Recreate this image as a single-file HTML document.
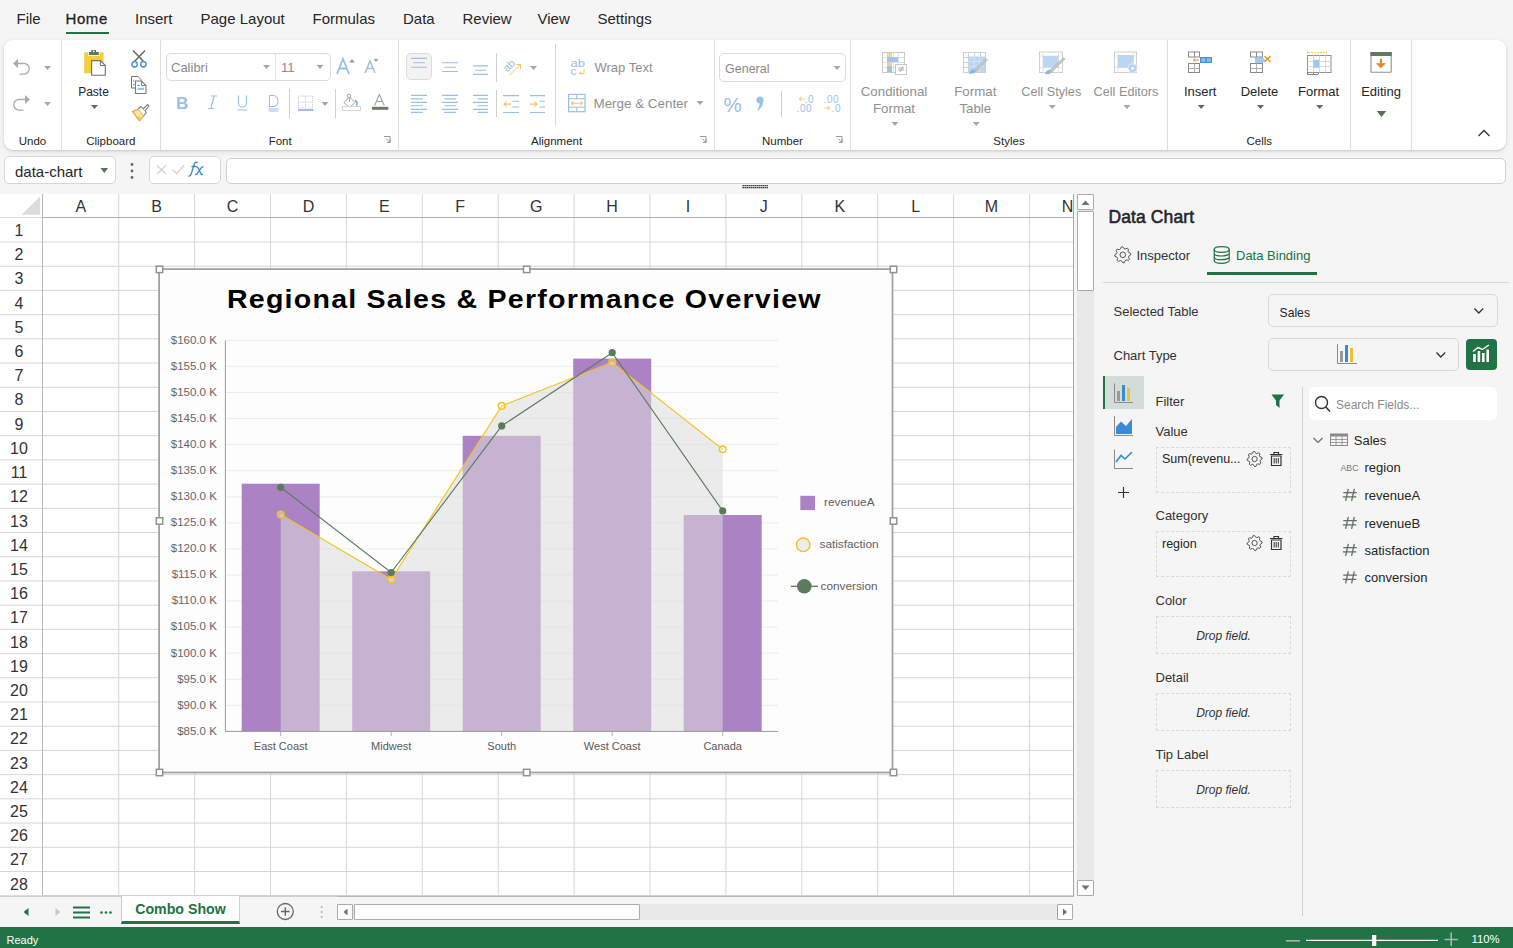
<!DOCTYPE html><html><head><meta charset="utf-8"><style>
html,body{margin:0;padding:0;}
body{width:1513px;height:948px;position:relative;overflow:hidden;background:#f5f5f5;font-family:"Liberation Sans", sans-serif;}
.t{position:absolute;line-height:1;white-space:nowrap;}
svg{overflow:visible}
</style></head><body>
<div class="t" style="left:16.5px;top:11.0px;font-size:15px;color:#262626;">File</div>
<div class="t" style="left:65.5px;top:11.2px;font-size:15px;color:#1f1f1f;letter-spacing:0.6px;-webkit-text-stroke:0.3px #1f1f1f;">Home</div>
<div class="t" style="left:135.0px;top:11.0px;font-size:15px;color:#262626;">Insert</div>
<div class="t" style="left:200.5px;top:11.0px;font-size:15px;color:#262626;">Page Layout</div>
<div class="t" style="left:312.5px;top:11.0px;font-size:15px;color:#262626;">Formulas</div>
<div class="t" style="left:403.0px;top:11.0px;font-size:15px;color:#262626;">Data</div>
<div class="t" style="left:462.5px;top:11.0px;font-size:15px;color:#262626;">Review</div>
<div class="t" style="left:537.5px;top:11.0px;font-size:15px;color:#262626;">View</div>
<div class="t" style="left:597.5px;top:11.0px;font-size:15px;color:#262626;">Settings</div>
<div style="position:absolute;left:66px;top:32px;width:43px;height:2px;background:#217346;"></div>
<div style="position:absolute;left:4px;top:40px;width:1502px;height:110px;background:#fff;border-radius:9px;box-shadow:0 1px 2px rgba(0,0,0,0.12),0 2px 6px rgba(0,0,0,0.08);"></div>
<div style="position:absolute;left:61px;top:40px;width:1px;height:110px;background:#dedede;"></div>
<div style="position:absolute;left:160px;top:40px;width:1px;height:110px;background:#dedede;"></div>
<div style="position:absolute;left:398px;top:40px;width:1px;height:110px;background:#dedede;"></div>
<div style="position:absolute;left:714px;top:40px;width:1px;height:110px;background:#dedede;"></div>
<div style="position:absolute;left:850px;top:40px;width:1px;height:110px;background:#dedede;"></div>
<div style="position:absolute;left:1167px;top:40px;width:1px;height:110px;background:#dedede;"></div>
<div style="position:absolute;left:1350px;top:40px;width:1px;height:110px;background:#dedede;"></div>
<div style="position:absolute;left:1411px;top:40px;width:1px;height:110px;background:#dedede;"></div>
<div class="t" style="left:-467.5px;width:1000px;text-align:center;top:135.9px;font-size:11.5px;color:#262626;">Undo</div>
<div class="t" style="left:-389.2px;width:1000px;text-align:center;top:135.9px;font-size:11.5px;color:#262626;">Clipboard</div>
<div class="t" style="left:-219.8px;width:1000px;text-align:center;top:135.9px;font-size:11.5px;color:#262626;">Font</div>
<div class="t" style="left:56.6px;width:1000px;text-align:center;top:135.9px;font-size:11.5px;color:#262626;">Alignment</div>
<div class="t" style="left:282.5px;width:1000px;text-align:center;top:135.9px;font-size:11.5px;color:#262626;">Number</div>
<div class="t" style="left:509.0px;width:1000px;text-align:center;top:135.9px;font-size:11.5px;color:#262626;">Styles</div>
<div class="t" style="left:759.3px;width:1000px;text-align:center;top:135.9px;font-size:11.5px;color:#262626;">Cells</div>
<div style="position:absolute;left:166px;top:53px;width:165px;height:28px;border:1px solid #dcdcdc;border-radius:5px;box-sizing:border-box;"></div>
<div style="position:absolute;left:275px;top:54px;width:1px;height:26px;background:#e2e2e2;"></div>
<div style="position:absolute;left:289px;top:89px;width:1px;height:29px;background:#d0d0d0;"></div>
<div style="position:absolute;left:335px;top:89px;width:1px;height:29px;background:#d0d0d0;"></div>
<div style="position:absolute;left:406px;top:53px;width:26px;height:27px;background:#f3f3f3;border:1px solid #dcdcdc;border-radius:5px;box-sizing:border-box;"></div>
<div style="position:absolute;left:496px;top:53px;width:1px;height:29px;background:#d0d0d0;"></div>
<div style="position:absolute;left:555px;top:44px;width:1px;height:82px;background:#d8d8d8;"></div>
<div style="position:absolute;left:496px;top:90px;width:1px;height:27px;background:#d0d0d0;"></div>
<div style="position:absolute;left:719px;top:53px;width:127px;height:29px;border:1px solid #dcdcdc;border-radius:5px;box-sizing:border-box;"></div>
<div style="position:absolute;left:781px;top:91px;width:1px;height:26px;background:#d0d0d0;"></div>
<div class="t" style="left:394.0px;width:1000px;text-align:center;top:84.7px;font-size:13.3px;color:#8f8f8f;">Conditional</div>
<div class="t" style="left:394.0px;width:1000px;text-align:center;top:101.7px;font-size:13.3px;color:#8f8f8f;">Format</div>
<div class="t" style="left:475.3px;width:1000px;text-align:center;top:84.7px;font-size:13.3px;color:#8f8f8f;">Format</div>
<div class="t" style="left:475.3px;width:1000px;text-align:center;top:101.7px;font-size:13.3px;color:#8f8f8f;">Table</div>
<div class="t" style="left:551.3px;width:1000px;text-align:center;top:85.8px;font-size:12.7px;color:#8f8f8f;">Cell Styles</div>
<div class="t" style="left:626.0px;width:1000px;text-align:center;top:85.8px;font-size:12.7px;color:#8f8f8f;">Cell Editors</div>
<div class="t" style="left:700.2px;width:1000px;text-align:center;top:85.0px;font-size:13px;color:#262626;">Insert</div>
<div class="t" style="left:759.5px;width:1000px;text-align:center;top:85.0px;font-size:13px;color:#262626;">Delete</div>
<div class="t" style="left:818.6px;width:1000px;text-align:center;top:85.0px;font-size:13px;color:#262626;">Format</div>
<div class="t" style="left:881.0px;width:1000px;text-align:center;top:84.7px;font-size:13px;color:#262626;">Editing</div>
<div class="t" style="left:171.0px;top:60.8px;font-size:13px;color:#8a8a8a;">Calibri</div>
<div class="t" style="left:281.0px;top:60.8px;font-size:13px;color:#8a8a8a;">11</div>
<div class="t" style="left:594.5px;top:61.4px;font-size:13px;color:#8f8f8f;">Wrap Text</div>
<div class="t" style="left:593.5px;top:96.5px;font-size:13.4px;color:#8f8f8f;">Merge &amp; Center</div>
<div class="t" style="left:725.0px;top:62.7px;font-size:12.5px;color:#8a8a8a;">General</div>
<div class="t" style="left:-406.5px;width:1000px;text-align:center;top:85.6px;font-size:12px;color:#262626;">Paste</div>
<svg style="position:absolute;left:0px;top:40px;" width="1513" height="110" viewBox="0 40 1513 110"><path d="M384 136.5 h6 v6 M386 138.5 l4 4 M390 139.5 v3 h-3" stroke="#9a9a9a" stroke-width="1" fill="none"/><path d="M700 136.5 h6 v6 M702 138.5 l4 4 M706 139.5 v3 h-3" stroke="#9a9a9a" stroke-width="1" fill="none"/><path d="M836 136.5 h6 v6 M838 138.5 l4 4 M842 139.5 v3 h-3" stroke="#9a9a9a" stroke-width="1" fill="none"/><path d="M16 63.5 h8 a5.3 5.3 0 0 1 0 10.6 h-4.5" stroke="#ababab" stroke-width="1.3" fill="none"/><path d="M13 63.5 l5 -4.5 v9 z" fill="#ababab"/><path d="M27 99.5 h-8 a5.3 5.3 0 0 0 0 10.6 h4.5" stroke="#ababab" stroke-width="1.3" fill="none"/><path d="M30 99.5 l-5 -4.5 v9 z" fill="#ababab"/><path d="M44.0 66.0 L51.0 66.0 L47.5 70.0 Z" fill="#a6a6a6"/><path d="M44.0 102.0 L51.0 102.0 L47.5 106.0 Z" fill="#a6a6a6"/><path d="M84.2 52.2 H88 V55.8 H99.6 V52.2 H103.6 V73.3 H84.2 Z" fill="#f2d03b"/><path d="M91.3 50 H96.1 V52 H98.8 V55 H88.9 V52 H91.3 Z" fill="#5f7a5f"/><circle cx="93.7" cy="51.4" r="0.8" fill="#fff"/><path d="M91.6 60.6 H100.4 L105.3 65.5 V75.3 H91.6 Z" fill="#fff" stroke="#6f6f6f" stroke-width="1.1"/><path d="M100.4 60.6 V65.5 H105.3" fill="none" stroke="#6f6f6f" stroke-width="1"/><path d="M91.0 105.0 L98.0 105.0 L94.5 109.0 Z" fill="#5b6e5b"/><path d="M133 50.5 L144.5 62.5 M145 50.5 L133.5 62.5" stroke="#5b6e5b" stroke-width="1.5"/><circle cx="134.6" cy="64.3" r="2.7" fill="#fff" stroke="#3b8ad6" stroke-width="1.3"/><circle cx="143.4" cy="64.3" r="2.7" fill="#fff" stroke="#3b8ad6" stroke-width="1.3"/><path d="M131.5 76.5 h6.5 l3 3 v8.5 h-9.5 z" fill="#fff" stroke="#6b7b6b" stroke-width="1"/><path d="M135.5 81 h6 l4.5 4.5 v8 h-10.5 z" fill="#fff" stroke="#7d7d7d" stroke-width="1.1"/><path d="M141.5 81 v4.5 h4.5" fill="none" stroke="#7d7d7d" stroke-width="1"/><path d="M133 81 h1.5 M133 84.5 h1.5 M137.5 85.5 h2 M137.5 89 h6.5" stroke="#3b8ad6" stroke-width="1"/><path d="M132.5 111.5 L138.5 109 L144 115.5 L139.5 121 Z" fill="#fbe3a0" stroke="#e8962a" stroke-width="1.1" stroke-linejoin="round"/><path d="M134.5 115 L141.5 118.5 L139.5 121 Z" fill="#f5c342"/><path d="M138.5 109 L141 106.5 L146.5 112.5 L144 115.5" fill="#fff" stroke="#7d7d7d" stroke-width="1.1" stroke-linejoin="round"/><path d="M143 109 L147.5 104.5 L149 106 L144.8 110.8" fill="#fff" stroke="#7d7d7d" stroke-width="1.1"/><path d="M263.0 65.0 L270.0 65.0 L266.5 69.0 Z" fill="#a6a6a6"/><path d="M316.5 65.0 L323.5 65.0 L320 69.0 Z" fill="#a6a6a6"/><path d="M337 74 L343 59 L349 74 M339.3 68.5 h7.4" stroke="#9ac0e6" stroke-width="1.8" fill="none"/><path d="M349 62.5 l3 -3.5 l3 3.5 z" fill="#a0a0a0"/><path d="M365 73 L370 61 L375 73 M366.8 68.5 h6.4" stroke="#9ac0e6" stroke-width="1.5" fill="none"/><path d="M373.5 59 h5 l-2.5 3 z" fill="#a0a0a0"/><text x="176" y="108.5" font-family="Liberation Sans" font-weight="700" font-size="17" fill="#9ac0e6">B</text><path d="M211 96 h6 M208 108.5 h6 M214 96.5 L211 108" stroke="#9ac0e6" stroke-width="1.2" fill="none"/><path d="M238.5 95.5 v7.5 a4 4 0 0 0 8 0 v-7.5 M237.5 110 h10" stroke="#9ac0e6" stroke-width="1.2" fill="none"/><path d="M269.5 95.5 h4 a4.5 5.5 0 0 1 0 11 h-4 z M268.5 109 h10 M268.5 111 h10" stroke="#9ac0e6" stroke-width="1.1" fill="none"/><path d="M298.5 96 h14 v12 h-14 z M305.5 96 v12 M298.5 102 h14" stroke="#c8c8c8" stroke-width="1" stroke-dasharray="1 1" fill="none"/><path d="M298 110 h15.5" stroke="#6fa8dc" stroke-width="1.4"/><path d="M321.5 102.0 L328.5 102.0 L325 106.0 Z" fill="#a6a6a6"/><path d="M343.8 102.5 L349.5 97 L355 102.5 L349.5 107.5 Z" fill="none" stroke="#a6a6a6" stroke-width="1"/><circle cx="349" cy="96" r="1.8" fill="none" stroke="#a6a6a6" stroke-width="1"/><path d="M349.5 98 V102" stroke="#a6a6a6" stroke-width="1"/><path d="M355 100.5 q3 0.5 1.5 5" stroke="#6fa8dc" stroke-width="1.6" fill="none"/><rect x="342.5" y="106.5" width="18" height="4" fill="#fff" stroke="#d8d8d8" stroke-width="1"/><path d="M374.6 105.5 L379.4 94.5 L384.3 105.5 M376.4 101.5 h6" stroke="#a0a0a0" stroke-width="1.1" fill="none"/><rect x="372" y="106.8" width="16.3" height="3" fill="#6b7b6b"/><path d="M411 58.4 H427 M413.3 62.8 H425 M411 67.3 H427" stroke="#9ac0e6" stroke-width="1.1"/><path d="M442 62.8 H458 M444.3 67.3 H456 M442 71.5 H458" stroke="#9ac0e6" stroke-width="1.1"/><path d="M473 65.9 H488 M475.1 70.2 H485.9 M473 74.4 H488" stroke="#9ac0e6" stroke-width="1.1"/><text x="502" y="68" font-family="Liberation Sans" font-size="11" fill="#9ac0e6" transform="rotate(-45 510 64)">ab</text><path d="M509.5 75 L520.5 64.5 M516 64.5 h4.5 v4.5" stroke="#f3c46a" stroke-width="1" fill="none"/><path d="M530.0 66.0 L537.0 66.0 L533.5 70.0 Z" fill="#a6a6a6"/><text x="570.6" y="66.5" font-family="Liberation Sans" font-size="11.5" fill="#9ac0e6" textLength="14.5" lengthAdjust="spacingAndGlyphs">ab</text><text x="570.6" y="75.3" font-family="Liberation Sans" font-size="11.5" fill="#9ac0e6">c</text><path d="M584 69 v4.3 h-4.5 M581.3 71.5 l-1.8 1.8 l1.8 1.8" stroke="#f3c46a" stroke-width="1" fill="none"/><path d="M411 95.4 H427 M411 98.9 H422.8 M411 102.4 H427 M411 105.8 H422.8 M411 109.4 H427 M411 112.4 H422.8" stroke="#9ac0e6" stroke-width="1.1"/><path d="M442 95.4 H458 M444.3 98.9 H456 M442 102.4 H458 M444.3 105.8 H456 M442 109.4 H458 M444.3 112.4 H456" stroke="#9ac0e6" stroke-width="1.1"/><path d="M473 95.4 H488 M477.6 98.9 H488 M473 102.4 H488 M477.6 105.8 H488 M473 109.4 H488 M477.6 112.4 H488" stroke="#9ac0e6" stroke-width="1.1"/><path d="M503 95.6 H519 M512.3 101.3 H519 M512.3 107 H519 M503 112.5 H519" stroke="#9ac0e6" stroke-width="1.1"/><path d="M511 104.2 H504 M506.5 101.7 L504 104.2 L506.5 106.7" stroke="#f3c46a" stroke-width="1.2" fill="none"/><path d="M530 95.6 H545 M539.5 101.3 H545 M539.5 107 H545 M530 112.5 H545" stroke="#9ac0e6" stroke-width="1.1"/><path d="M530 104.2 H537 M534.5 101.7 L537 104.2 L534.5 106.7" stroke="#f3c46a" stroke-width="1.2" fill="none"/><rect x="568.6" y="94.4" width="16.4" height="17.3" fill="none" stroke="#9ac0e6" stroke-width="1.2"/><path d="M568.6 98.8 H585 M568.6 107.3 H585 M576.8 94.4 V98.8 M576.8 107.3 V111.7" stroke="#9ac0e6" stroke-width="1.1"/><path d="M571.5 103.3 H582.5 M573.5 101.3 L571.5 103.3 L573.5 105.3 M580.5 101.3 L582.5 103.3 L580.5 105.3" stroke="#f3c46a" stroke-width="1.1" fill="none"/><path d="M696.5 101.0 L703.5 101.0 L700 105.0 Z" fill="#a6a6a6"/><path d="M833.5 66.0 L840.5 66.0 L837 70.0 Z" fill="#a6a6a6"/><text x="723.5" y="111.8" font-family="Liberation Sans" font-size="20.5" fill="#9ac0e6">%</text><circle cx="760" cy="100" r="3.6" fill="#9ac0e6"/><path d="M762.5 99 Q764.5 107 756.5 111.5 Q760 106 759.5 102.5 Z" fill="#9ac0e6"/><text x="804.5" y="102.5" font-family="Liberation Sans" font-size="10" fill="#9ac0e6" letter-spacing="0.6">.0</text><text x="796.5" y="111.5" font-family="Liberation Sans" font-size="10" fill="#9ac0e6" letter-spacing="0.6">.00</text><path d="M805 99 h-5.5 M801.5 97 l-2 2 l2 2" stroke="#f5d28a" stroke-width="1.2" fill="none"/><text x="823.5" y="102.5" font-family="Liberation Sans" font-size="10" fill="#9ac0e6" letter-spacing="0.6">.00</text><text x="831.5" y="111.5" font-family="Liberation Sans" font-size="10" fill="#9ac0e6" letter-spacing="0.6">.0</text><path d="M824 108 h5.5 M827.5 106 l2 2 l-2 2" stroke="#f5d28a" stroke-width="1.2" fill="none"/><rect x="882.5" y="52.5" width="22" height="20" fill="#fff" stroke="#c8c8c8" stroke-width="1"/><path d="M888.5 52.5 V72.5" stroke="#e2e2e2" stroke-width="1"/><path d="M893.5 52.5 V72.5" stroke="#e2e2e2" stroke-width="1"/><path d="M898.5 52.5 V72.5" stroke="#e2e2e2" stroke-width="1"/><path d="M882.5 57.5 H904.5" stroke="#e2e2e2" stroke-width="1"/><path d="M882.5 62.5 H904.5" stroke="#e2e2e2" stroke-width="1"/><path d="M882.5 67.5 H904.5" stroke="#e2e2e2" stroke-width="1"/><rect x="887" y="53" width="5" height="4" fill="#f4d48a"/><rect x="887" y="57" width="11" height="5" fill="#9fc4ea"/><rect x="887" y="62" width="5" height="4" fill="#f4d48a"/><rect x="887" y="66" width="5" height="6" fill="#9fc4ea"/><rect x="895.5" y="64.5" width="11" height="10" fill="#fff" stroke="#c8c8c8"/><path d="M898 70 h6 M898 68 h6 M903 66 l-3 6" stroke="#a0a0a0" stroke-width=".8"/><rect x="963.5" y="52.5" width="22" height="20" fill="#fff" stroke="#cfcfcf" stroke-width="1"/><path d="M968.5 52.5 V72.5" stroke="#cfcfcf" stroke-width="1"/><path d="M974.5 52.5 V72.5" stroke="#cfcfcf" stroke-width="1"/><path d="M980.5 52.5 V72.5" stroke="#cfcfcf" stroke-width="1"/><path d="M963.5 57.5 H985.5" stroke="#cfcfcf" stroke-width="1"/><path d="M963.5 62.5 H985.5" stroke="#cfcfcf" stroke-width="1"/><path d="M963.5 67.5 H985.5" stroke="#cfcfcf" stroke-width="1"/><rect x="968.5" y="56.5" width="16.5" height="15.5" fill="#bcd6f0"/><path d="M968.5 61.5 h16.5 M968.5 66.5 h16.5 M974 56.5 v15.5 M979.5 56.5 v15.5" stroke="#d6e6f6" stroke-width="0.8"/><path d="M973.5 70.5 L986 58.5 L987.5 60 L975 72 Z" fill="#c8c8c8" stroke="#a8a8a8" stroke-width="0.6"/><path d="M969 73.5 q1 -4 4.5 -4.5 l2 2 q-1 3.5 -6.5 2.5z" fill="#8fb8e0"/><rect x="1039.5" y="52.0" width="23" height="20.5" fill="#fff" stroke="#cfcfcf" stroke-width="1"/><path d="M1039.5 56 h23 M1039.5 67.5 h23 M1043 52 v20.5 M1058.5 52 v20.5" stroke="#e4e4e4" stroke-width="1"/><rect x="1043" y="56" width="15.5" height="11.5" fill="#bcd6f0"/><path d="M1049 71 L1063.5 57.5 L1065 59 L1051.5 72.5 Z" fill="#c8c8c8" stroke="#a8a8a8" stroke-width="0.6"/><path d="M1045 74 q1 -4 4.5 -4.5 l2 2 q-1 3.5 -6.5 2.5z" fill="#8fb8e0"/><rect x="1114.5" y="52.0" width="22" height="20.5" fill="#fff" stroke="#cfcfcf" stroke-width="1"/><path d="M1114.5 56 h22 M1114.5 67.5 h22 M1118 52 v20.5 M1133.5 52 v20.5" stroke="#e4e4e4" stroke-width="1"/><rect x="1117.8" y="55" width="15.7" height="12.5" fill="#bcd6f0"/><polygon points="1137.60,67.29 1137.70,68.30 1136.17,69.03 1135.96,69.73 1136.82,71.19 1136.18,71.98 1134.58,71.41 1133.93,71.76 1133.51,73.40 1132.50,73.50 1131.77,71.97 1131.07,71.76 1129.61,72.62 1128.82,71.98 1129.39,70.38 1129.04,69.73 1127.40,69.31 1127.30,68.30 1128.83,67.57 1129.04,66.87 1128.18,65.41 1128.82,64.62 1130.42,65.19 1131.07,64.84 1131.49,63.20 1132.50,63.10 1133.23,64.63 1133.93,64.84 1135.39,63.98 1136.18,64.62 1135.61,66.22 1135.96,66.87" fill="#a9cdf0" stroke="#fff" stroke-width="0.6"/><circle cx="1132.5" cy="68.3" r="1.72" fill="#fff"/><path d="M891.5 122.0 L898.5 122.0 L895 126.0 Z" fill="#a6a6a6"/><path d="M972.8 122.0 L979.8 122.0 L976.3 126.0 Z" fill="#a6a6a6"/><path d="M1048.8 105.0 L1055.8 105.0 L1052.3 109.0 Z" fill="#a6a6a6"/><path d="M1123.5 105.0 L1130.5 105.0 L1127 109.0 Z" fill="#a6a6a6"/><rect x="1188.5" y="52.0" width="11" height="5" fill="#fff" stroke="#8a8a8a" stroke-width="1"/><path d="M1194.5 52.0 V57.0" stroke="#8a8a8a" stroke-width="1"/><rect x="1188.5" y="63.5" width="11" height="9" fill="#fff" stroke="#8a8a8a" stroke-width="1"/><path d="M1194.5 63.5 V72.5" stroke="#b0b0b0" stroke-width="1"/><path d="M1188.5 68.5 H1199.5" stroke="#b0b0b0" stroke-width="1"/><rect x="1200" y="57" width="12" height="6" fill="#4a90d9"/><rect x="1201.3" y="58.3" width="4" height="3.4" fill="#8ec0ee"/><rect x="1206.8" y="58.3" width="4" height="3.4" fill="#8ec0ee"/><path d="M1199 60 h-5.5 M1195.3 58.3 l-1.8 1.7 l1.8 1.7" stroke="#e08a1e" stroke-width="1" fill="none"/><rect x="1250.5" y="52.0" width="12" height="5" fill="#fff" stroke="#8a8a8a" stroke-width="1"/><path d="M1256.5 52.0 V57.0" stroke="#8a8a8a" stroke-width="1"/><rect x="1250.5" y="63.5" width="12" height="9" fill="#fff" stroke="#8a8a8a" stroke-width="1"/><path d="M1256.5 63.5 V72.5" stroke="#b0b0b0" stroke-width="1"/><path d="M1250.5 68.5 H1262.5" stroke="#b0b0b0" stroke-width="1"/><path d="M1255.5 57.5 h7.5 l2 2.5 l-2 2.5 h-7.5 z" fill="#9fcaf2" stroke="#6fb0ea" stroke-width="0.8" stroke-dasharray="1 0.8"/><path d="M1264.5 56 l6 6 M1270.5 56 l-6 6" stroke="#e08a1e" stroke-width="1.2"/><rect x="1307.5" y="55.5" width="23.5" height="17" fill="#fff" stroke="#8f8f8f" stroke-width="1"/><path d="M1313.5 55.5 V72.5" stroke="#d8d8d8" stroke-width="1"/><path d="M1319.5 55.5 V72.5" stroke="#d8d8d8" stroke-width="1"/><path d="M1325.5 55.5 V72.5" stroke="#d8d8d8" stroke-width="1"/><path d="M1307.5 61.5 H1331.0" stroke="#d8d8d8" stroke-width="1"/><path d="M1307.5 66.5 H1331.0" stroke="#d8d8d8" stroke-width="1"/><rect x="1313.5" y="59.8" width="5.5" height="8" fill="#9fc8f0"/><path d="M1308 52.6 h18 M1307.5 51.5 v2 M1326.5 51.5 v2" stroke="#f0c060" stroke-width="1" stroke-dasharray="2 1"/><path d="M1307.5 72.5 v2 h5.5 l1 -2 M1313 74.5 h5 l0.5 -2" stroke="#5f7a5f" stroke-width="0.9" fill="none"/><path d="M1197.7 105.0 L1204.7 105.0 L1201.2 109.0 Z" fill="#5b6e5b"/><path d="M1257.0 105.0 L1264.0 105.0 L1260.5 109.0 Z" fill="#5b6e5b"/><path d="M1316.1 105.0 L1323.1 105.0 L1319.6 109.0 Z" fill="#5b6e5b"/><rect x="1371" y="52.5" width="20.2" height="19.8" rx="0.8" fill="#fff" stroke="#8f8f8f" stroke-width="1.1"/><rect x="1370.5" y="52" width="21.2" height="4" fill="#5f7a5f"/><path d="M1381 58.8 v6" stroke="#df8a2e" stroke-width="2.2"/><path d="M1375.8 63.3 h10.2 l-5.1 5 z" fill="#df8a2e"/><path d="M1376.75 111.0 L1386.25 111.0 L1381.5 117.0 Z" fill="#5b6e5b"/><path d="M1478.5 136 L1484 130.5 L1489.5 136" stroke="#333" stroke-width="1.3" fill="none"/></svg>
<div style="position:absolute;left:4px;top:156px;width:112px;height:28px;background:#fff;border:1px solid #d6d6d6;border-radius:5px;box-sizing:border-box;"></div>
<div class="t" style="left:15.0px;top:163.9px;font-size:15px;color:#262626;">data-chart</div>
<div style="position:absolute;left:149px;top:156px;width:72px;height:28px;background:#fff;border:1px solid #d6d6d6;border-radius:5px;box-sizing:border-box;"></div>
<div style="position:absolute;left:226px;top:158px;width:1280px;height:26px;background:#fff;border:1px solid #d0d0d0;border-radius:5px;box-sizing:border-box;"></div>
<svg style="position:absolute;left:0px;top:150px;" width="1513" height="45" viewBox="0 150 1513 45"><path d="M100.55 168.0 L108.05 168.0 L104.3 173.0 Z" fill="#5b6e5b"/><circle cx="132" cy="164.5" r="1.4" fill="#5b6e5b"/><circle cx="132" cy="171" r="1.4" fill="#5b6e5b"/><circle cx="132" cy="177.5" r="1.4" fill="#5b6e5b"/><path d="M157 165.5 L166 174 M166 165.5 L157 174" stroke="#d4d4d4" stroke-width="1.3"/><path d="M172.5 169.5 L176.5 173.5 L184 165.5" stroke="#d4d4d4" stroke-width="1.3" fill="none"/><path d="M188.5 176 q2 0.5 3 -3 l2.8 -9 q1 -2.5 3.5 -1.5 M191.5 166.5 h5" stroke="#3a86c8" stroke-width="1.3" fill="none"/><path d="M196 167 q1.5 -0.5 2.5 1.5 l2.5 5.5 q0.8 1 2 0.5 M203.5 167 q-1 -0.5 -2 0.5 l-4.5 6.5 q-0.8 0.8 -1.8 0.3" stroke="#3a86c8" stroke-width="1.3" fill="none"/><rect x="742.5" y="185" width="1.3" height="1.3" fill="#222"/><rect x="742.5" y="187" width="1.3" height="1.3" fill="#222"/><rect x="744.5" y="185" width="1.3" height="1.3" fill="#222"/><rect x="744.5" y="187" width="1.3" height="1.3" fill="#222"/><rect x="746.5" y="185" width="1.3" height="1.3" fill="#222"/><rect x="746.5" y="187" width="1.3" height="1.3" fill="#222"/><rect x="748.5" y="185" width="1.3" height="1.3" fill="#222"/><rect x="748.5" y="187" width="1.3" height="1.3" fill="#222"/><rect x="750.5" y="185" width="1.3" height="1.3" fill="#222"/><rect x="750.5" y="187" width="1.3" height="1.3" fill="#222"/><rect x="752.5" y="185" width="1.3" height="1.3" fill="#222"/><rect x="752.5" y="187" width="1.3" height="1.3" fill="#222"/><rect x="754.5" y="185" width="1.3" height="1.3" fill="#222"/><rect x="754.5" y="187" width="1.3" height="1.3" fill="#222"/><rect x="756.5" y="185" width="1.3" height="1.3" fill="#222"/><rect x="756.5" y="187" width="1.3" height="1.3" fill="#222"/><rect x="758.5" y="185" width="1.3" height="1.3" fill="#222"/><rect x="758.5" y="187" width="1.3" height="1.3" fill="#222"/><rect x="760.5" y="185" width="1.3" height="1.3" fill="#222"/><rect x="760.5" y="187" width="1.3" height="1.3" fill="#222"/><rect x="762.5" y="185" width="1.3" height="1.3" fill="#222"/><rect x="762.5" y="187" width="1.3" height="1.3" fill="#222"/><rect x="764.5" y="185" width="1.3" height="1.3" fill="#222"/><rect x="764.5" y="187" width="1.3" height="1.3" fill="#222"/><rect x="766.5" y="185" width="1.3" height="1.3" fill="#222"/><rect x="766.5" y="187" width="1.3" height="1.3" fill="#222"/></svg>
<div style="position:absolute;left:0px;top:194px;width:1074px;height:702px;background:#fff;"></div>
<svg style="position:absolute;left:0px;top:194px;" width="1080" height="705" viewBox="0 194 1080 705"><path d="M118.70 194 V895" stroke="#d6d6d6" stroke-width="1"/><path d="M194.60 194 V895" stroke="#d6d6d6" stroke-width="1"/><path d="M270.50 194 V895" stroke="#d6d6d6" stroke-width="1"/><path d="M346.40 194 V895" stroke="#d6d6d6" stroke-width="1"/><path d="M422.30 194 V895" stroke="#d6d6d6" stroke-width="1"/><path d="M498.20 194 V895" stroke="#d6d6d6" stroke-width="1"/><path d="M574.10 194 V895" stroke="#d6d6d6" stroke-width="1"/><path d="M650.00 194 V895" stroke="#d6d6d6" stroke-width="1"/><path d="M725.90 194 V895" stroke="#d6d6d6" stroke-width="1"/><path d="M801.80 194 V895" stroke="#d6d6d6" stroke-width="1"/><path d="M877.70 194 V895" stroke="#d6d6d6" stroke-width="1"/><path d="M953.60 194 V895" stroke="#d6d6d6" stroke-width="1"/><path d="M1029.50 194 V895" stroke="#d6d6d6" stroke-width="1"/><path d="M0 242.01 H1073" stroke="#d6d6d6" stroke-width="1"/><path d="M0 266.22 H1073" stroke="#d6d6d6" stroke-width="1"/><path d="M0 290.43 H1073" stroke="#d6d6d6" stroke-width="1"/><path d="M0 314.64 H1073" stroke="#d6d6d6" stroke-width="1"/><path d="M0 338.85 H1073" stroke="#d6d6d6" stroke-width="1"/><path d="M0 363.06 H1073" stroke="#d6d6d6" stroke-width="1"/><path d="M0 387.27 H1073" stroke="#d6d6d6" stroke-width="1"/><path d="M0 411.48 H1073" stroke="#d6d6d6" stroke-width="1"/><path d="M0 435.69 H1073" stroke="#d6d6d6" stroke-width="1"/><path d="M0 459.90 H1073" stroke="#d6d6d6" stroke-width="1"/><path d="M0 484.11 H1073" stroke="#d6d6d6" stroke-width="1"/><path d="M0 508.32 H1073" stroke="#d6d6d6" stroke-width="1"/><path d="M0 532.53 H1073" stroke="#d6d6d6" stroke-width="1"/><path d="M0 556.74 H1073" stroke="#d6d6d6" stroke-width="1"/><path d="M0 580.95 H1073" stroke="#d6d6d6" stroke-width="1"/><path d="M0 605.16 H1073" stroke="#d6d6d6" stroke-width="1"/><path d="M0 629.37 H1073" stroke="#d6d6d6" stroke-width="1"/><path d="M0 653.58 H1073" stroke="#d6d6d6" stroke-width="1"/><path d="M0 677.79 H1073" stroke="#d6d6d6" stroke-width="1"/><path d="M0 702.00 H1073" stroke="#d6d6d6" stroke-width="1"/><path d="M0 726.21 H1073" stroke="#d6d6d6" stroke-width="1"/><path d="M0 750.42 H1073" stroke="#d6d6d6" stroke-width="1"/><path d="M0 774.63 H1073" stroke="#d6d6d6" stroke-width="1"/><path d="M0 798.84 H1073" stroke="#d6d6d6" stroke-width="1"/><path d="M0 823.05 H1073" stroke="#d6d6d6" stroke-width="1"/><path d="M0 847.26 H1073" stroke="#d6d6d6" stroke-width="1"/><path d="M0 871.47 H1073" stroke="#d6d6d6" stroke-width="1"/><path d="M0 895.68 H1073" stroke="#d6d6d6" stroke-width="1"/><path d="M42.5 194 V895" stroke="#b9b9b9" stroke-width="1"/><path d="M42 217.5 H1073" stroke="#b0b0b0" stroke-width="1"/><path d="M0 217.5 H42" stroke="#dadada" stroke-width="1"/><path d="M1073.5 194 V896" stroke="#a8a8a8" stroke-width="1"/><path d="M42 896.3 H1074" stroke="#a8a8a8" stroke-width="1"/><path d="M40 196.5 V214.7 H21.5 Z" fill="#dcdcdc"/></svg>
<div class="t" style="left:-419.2px;width:1000px;text-align:center;top:199.0px;font-size:16px;color:#333333;">A</div>
<div class="t" style="left:-343.4px;width:1000px;text-align:center;top:199.0px;font-size:16px;color:#333333;">B</div>
<div class="t" style="left:-267.4px;width:1000px;text-align:center;top:199.0px;font-size:16px;color:#333333;">C</div>
<div class="t" style="left:-191.5px;width:1000px;text-align:center;top:199.0px;font-size:16px;color:#333333;">D</div>
<div class="t" style="left:-115.6px;width:1000px;text-align:center;top:199.0px;font-size:16px;color:#333333;">E</div>
<div class="t" style="left:-39.8px;width:1000px;text-align:center;top:199.0px;font-size:16px;color:#333333;">F</div>
<div class="t" style="left:36.2px;width:1000px;text-align:center;top:199.0px;font-size:16px;color:#333333;">G</div>
<div class="t" style="left:112.0px;width:1000px;text-align:center;top:199.0px;font-size:16px;color:#333333;">H</div>
<div class="t" style="left:188.0px;width:1000px;text-align:center;top:199.0px;font-size:16px;color:#333333;">I</div>
<div class="t" style="left:263.8px;width:1000px;text-align:center;top:199.0px;font-size:16px;color:#333333;">J</div>
<div class="t" style="left:339.8px;width:1000px;text-align:center;top:199.0px;font-size:16px;color:#333333;">K</div>
<div class="t" style="left:415.7px;width:1000px;text-align:center;top:199.0px;font-size:16px;color:#333333;">L</div>
<div class="t" style="left:491.5px;width:1000px;text-align:center;top:199.0px;font-size:16px;color:#333333;">M</div>
<div class="t" style="left:567.5px;width:1000px;text-align:center;top:199.0px;font-size:16px;color:#333333;">N</div>
<div class="t" style="left:-481.0px;width:1000px;text-align:center;top:223.0px;font-size:16px;color:#333333;">1</div>
<div class="t" style="left:-481.0px;width:1000px;text-align:center;top:247.2px;font-size:16px;color:#333333;">2</div>
<div class="t" style="left:-481.0px;width:1000px;text-align:center;top:271.4px;font-size:16px;color:#333333;">3</div>
<div class="t" style="left:-481.0px;width:1000px;text-align:center;top:295.6px;font-size:16px;color:#333333;">4</div>
<div class="t" style="left:-481.0px;width:1000px;text-align:center;top:319.8px;font-size:16px;color:#333333;">5</div>
<div class="t" style="left:-481.0px;width:1000px;text-align:center;top:344.0px;font-size:16px;color:#333333;">6</div>
<div class="t" style="left:-481.0px;width:1000px;text-align:center;top:368.2px;font-size:16px;color:#333333;">7</div>
<div class="t" style="left:-481.0px;width:1000px;text-align:center;top:392.4px;font-size:16px;color:#333333;">8</div>
<div class="t" style="left:-481.0px;width:1000px;text-align:center;top:416.6px;font-size:16px;color:#333333;">9</div>
<div class="t" style="left:-481.0px;width:1000px;text-align:center;top:440.9px;font-size:16px;color:#333333;">10</div>
<div class="t" style="left:-481.0px;width:1000px;text-align:center;top:465.1px;font-size:16px;color:#333333;">11</div>
<div class="t" style="left:-481.0px;width:1000px;text-align:center;top:489.3px;font-size:16px;color:#333333;">12</div>
<div class="t" style="left:-481.0px;width:1000px;text-align:center;top:513.5px;font-size:16px;color:#333333;">13</div>
<div class="t" style="left:-481.0px;width:1000px;text-align:center;top:537.7px;font-size:16px;color:#333333;">14</div>
<div class="t" style="left:-481.0px;width:1000px;text-align:center;top:561.9px;font-size:16px;color:#333333;">15</div>
<div class="t" style="left:-481.0px;width:1000px;text-align:center;top:586.1px;font-size:16px;color:#333333;">16</div>
<div class="t" style="left:-481.0px;width:1000px;text-align:center;top:610.3px;font-size:16px;color:#333333;">17</div>
<div class="t" style="left:-481.0px;width:1000px;text-align:center;top:634.5px;font-size:16px;color:#333333;">18</div>
<div class="t" style="left:-481.0px;width:1000px;text-align:center;top:658.7px;font-size:16px;color:#333333;">19</div>
<div class="t" style="left:-481.0px;width:1000px;text-align:center;top:683.0px;font-size:16px;color:#333333;">20</div>
<div class="t" style="left:-481.0px;width:1000px;text-align:center;top:707.2px;font-size:16px;color:#333333;">21</div>
<div class="t" style="left:-481.0px;width:1000px;text-align:center;top:731.4px;font-size:16px;color:#333333;">22</div>
<div class="t" style="left:-481.0px;width:1000px;text-align:center;top:755.6px;font-size:16px;color:#333333;">23</div>
<div class="t" style="left:-481.0px;width:1000px;text-align:center;top:779.8px;font-size:16px;color:#333333;">24</div>
<div class="t" style="left:-481.0px;width:1000px;text-align:center;top:804.0px;font-size:16px;color:#333333;">25</div>
<div class="t" style="left:-481.0px;width:1000px;text-align:center;top:828.2px;font-size:16px;color:#333333;">26</div>
<div class="t" style="left:-481.0px;width:1000px;text-align:center;top:852.4px;font-size:16px;color:#333333;">27</div>
<div class="t" style="left:-481.0px;width:1000px;text-align:center;top:876.6px;font-size:16px;color:#333333;">28</div>
<svg style="position:absolute;left:150px;top:260px;" width="760" height="520" viewBox="150 260 760 520"><rect x="159.1" y="269.1" width="733.4" height="503.4" fill="#fdfdfd" stroke="#a0a3a0" stroke-width="1.8"/><path d="M225.4 705.3 H778" stroke="#ececec" stroke-width="1"/><path d="M225.4 679.3 H778" stroke="#ececec" stroke-width="1"/><path d="M225.4 653.2 H778" stroke="#ececec" stroke-width="1"/><path d="M225.4 627.1 H778" stroke="#ececec" stroke-width="1"/><path d="M225.4 601.0 H778" stroke="#ececec" stroke-width="1"/><path d="M225.4 575.0 H778" stroke="#ececec" stroke-width="1"/><path d="M225.4 548.9 H778" stroke="#ececec" stroke-width="1"/><path d="M225.4 522.8 H778" stroke="#ececec" stroke-width="1"/><path d="M225.4 496.8 H778" stroke="#ececec" stroke-width="1"/><path d="M225.4 470.7 H778" stroke="#ececec" stroke-width="1"/><path d="M225.4 444.6 H778" stroke="#ececec" stroke-width="1"/><path d="M225.4 418.6 H778" stroke="#ececec" stroke-width="1"/><path d="M225.4 392.5 H778" stroke="#ececec" stroke-width="1"/><path d="M225.4 366.4 H778" stroke="#ececec" stroke-width="1"/><path d="M225.4 340.3 H778" stroke="#ececec" stroke-width="1"/><rect x="241.7" y="483.7" width="78" height="247.7" fill="#ab83c5"/><rect x="352.2" y="571.3" width="78" height="160.1" fill="#ab83c5"/><rect x="462.7" y="435.8" width="78" height="295.6" fill="#ab83c5"/><rect x="573.2" y="358.6" width="78" height="372.8" fill="#ab83c5"/><rect x="683.7" y="515.0" width="78" height="216.4" fill="#ab83c5"/><polygon points="280.7,731.4 280.7,514.5 391.2,579.5 501.7,405.9 612.2,362.3 722.7,449.2 722.7,731.4" fill="rgb(220,220,220)" fill-opacity="0.54"/><path d="M225.4 340.5 V731.4 H778" stroke="#9a9a9a" stroke-width="1" fill="none"/><path d="M280.7 731.4 V736" stroke="#b0b0b0" stroke-width="1"/><path d="M391.2 731.4 V736" stroke="#b0b0b0" stroke-width="1"/><path d="M501.7 731.4 V736" stroke="#b0b0b0" stroke-width="1"/><path d="M612.2 731.4 V736" stroke="#b0b0b0" stroke-width="1"/><path d="M722.7 731.4 V736" stroke="#b0b0b0" stroke-width="1"/><polyline points="280.7,514.5 391.2,579.5 501.7,405.9 612.2,362.3 722.7,449.2" fill="none" stroke="#f4c41c" stroke-width="1.15"/><polyline points="280.7,487.3 391.2,572.5 501.7,425.9 612.2,352.7 722.7,510.9" fill="none" stroke="#5c7a5c" stroke-width="1.15"/><circle cx="280.7" cy="514.5" r="3.3" fill="#ffffff" fill-opacity="0.35" stroke="#f4c41c" stroke-width="1.5"/><circle cx="280.7" cy="487.3" r="3.6" fill="#5c7a5c"/><circle cx="391.2" cy="579.5" r="3.3" fill="#ffffff" fill-opacity="0.35" stroke="#f4c41c" stroke-width="1.5"/><circle cx="391.2" cy="572.5" r="3.6" fill="#5c7a5c"/><circle cx="501.7" cy="405.9" r="3.3" fill="#ffffff" fill-opacity="0.35" stroke="#f4c41c" stroke-width="1.5"/><circle cx="501.7" cy="425.9" r="3.6" fill="#5c7a5c"/><circle cx="612.2" cy="362.3" r="3.3" fill="#ffffff" fill-opacity="0.35" stroke="#f4c41c" stroke-width="1.5"/><circle cx="612.2" cy="352.7" r="3.6" fill="#5c7a5c"/><circle cx="722.7" cy="449.2" r="3.3" fill="#ffffff" fill-opacity="0.35" stroke="#f4c41c" stroke-width="1.5"/><circle cx="722.7" cy="510.9" r="3.6" fill="#5c7a5c"/><rect x="800.3" y="495.8" width="14.7" height="14.3" fill="#ab83c5"/><circle cx="803.2" cy="544.8" r="6.8" fill="#ececec" stroke="#f2c230" stroke-width="1.4"/><path d="M790.8 586.3 H818" stroke="#5c7a5c" stroke-width="1.3"/><circle cx="804.3" cy="586.3" r="7.3" fill="#5c7a5c"/><rect x="156.3" y="266.2" width="6.4" height="6.4" fill="#fff" stroke="#8e958e" stroke-width="1.5"/><rect x="523.5" y="266.2" width="6.4" height="6.4" fill="#fff" stroke="#8e958e" stroke-width="1.5"/><rect x="890.3" y="266.2" width="6.4" height="6.4" fill="#fff" stroke="#8e958e" stroke-width="1.5"/><rect x="156.3" y="517.8" width="6.4" height="6.4" fill="#fff" stroke="#8e958e" stroke-width="1.5"/><rect x="890.3" y="517.8" width="6.4" height="6.4" fill="#fff" stroke="#8e958e" stroke-width="1.5"/><rect x="156.3" y="769.3" width="6.4" height="6.4" fill="#fff" stroke="#8e958e" stroke-width="1.5"/><rect x="523.5" y="769.3" width="6.4" height="6.4" fill="#fff" stroke="#8e958e" stroke-width="1.5"/><rect x="890.3" y="769.3" width="6.4" height="6.4" fill="#fff" stroke="#8e958e" stroke-width="1.5"/></svg>
<div class="t" style="left:26.5px;width:1000px;text-align:center;top:286.0px;font-size:26px;color:#000;font-weight:700;letter-spacing:1.1px;transform:scaleX(1.1);transform-origin:526.5px 0;">Regional Sales &amp; Performance Overview</div>
<div class="t" style="left:-83.2px;width:300px;text-align:right;top:725.7px;font-size:11.5px;color:#666666;">$85.0 K</div>
<div class="t" style="left:-83.2px;width:300px;text-align:right;top:699.6px;font-size:11.5px;color:#666666;">$90.0 K</div>
<div class="t" style="left:-83.2px;width:300px;text-align:right;top:673.5px;font-size:11.5px;color:#666666;">$95.0 K</div>
<div class="t" style="left:-83.2px;width:300px;text-align:right;top:647.5px;font-size:11.5px;color:#666666;">$100.0 K</div>
<div class="t" style="left:-83.2px;width:300px;text-align:right;top:621.4px;font-size:11.5px;color:#666666;">$105.0 K</div>
<div class="t" style="left:-83.2px;width:300px;text-align:right;top:595.3px;font-size:11.5px;color:#666666;">$110.0 K</div>
<div class="t" style="left:-83.2px;width:300px;text-align:right;top:569.2px;font-size:11.5px;color:#666666;">$115.0 K</div>
<div class="t" style="left:-83.2px;width:300px;text-align:right;top:543.2px;font-size:11.5px;color:#666666;">$120.0 K</div>
<div class="t" style="left:-83.2px;width:300px;text-align:right;top:517.1px;font-size:11.5px;color:#666666;">$125.0 K</div>
<div class="t" style="left:-83.2px;width:300px;text-align:right;top:491.0px;font-size:11.5px;color:#666666;">$130.0 K</div>
<div class="t" style="left:-83.2px;width:300px;text-align:right;top:465.0px;font-size:11.5px;color:#666666;">$135.0 K</div>
<div class="t" style="left:-83.2px;width:300px;text-align:right;top:438.9px;font-size:11.5px;color:#666666;">$140.0 K</div>
<div class="t" style="left:-83.2px;width:300px;text-align:right;top:412.8px;font-size:11.5px;color:#666666;">$145.0 K</div>
<div class="t" style="left:-83.2px;width:300px;text-align:right;top:386.8px;font-size:11.5px;color:#666666;">$150.0 K</div>
<div class="t" style="left:-83.2px;width:300px;text-align:right;top:360.7px;font-size:11.5px;color:#666666;">$155.0 K</div>
<div class="t" style="left:-83.2px;width:300px;text-align:right;top:334.6px;font-size:11.5px;color:#666666;">$160.0 K</div>
<div class="t" style="left:-219.3px;width:1000px;text-align:center;top:741.1px;font-size:11px;color:#595959;">East Coast</div>
<div class="t" style="left:-108.8px;width:1000px;text-align:center;top:741.1px;font-size:11px;color:#595959;">Midwest</div>
<div class="t" style="left:1.7px;width:1000px;text-align:center;top:741.1px;font-size:11px;color:#595959;">South</div>
<div class="t" style="left:112.2px;width:1000px;text-align:center;top:741.1px;font-size:11px;color:#595959;">West Coast</div>
<div class="t" style="left:222.7px;width:1000px;text-align:center;top:741.1px;font-size:11px;color:#595959;">Canada</div>
<div class="t" style="left:824.0px;top:496.8px;font-size:11.8px;color:#606060;">revenueA</div>
<div class="t" style="left:819.5px;top:539.3px;font-size:11.8px;color:#606060;">satisfaction</div>
<div class="t" style="left:820.5px;top:580.8px;font-size:11.8px;color:#606060;">conversion</div>
<div style="position:absolute;left:1077px;top:194px;width:17px;height:702px;background:#e8e8e8;"></div>
<div style="position:absolute;left:1077px;top:194px;width:17px;height:16px;background:#fff;border:1px solid #ababab;border-radius:1px;box-sizing:border-box;"></div>
<div style="position:absolute;left:1077px;top:211px;width:17px;height:80px;background:#fff;border:1px solid #ababab;border-radius:1px;box-sizing:border-box;"></div>
<div style="position:absolute;left:1077px;top:880px;width:17px;height:16px;background:#fff;border:1px solid #ababab;border-radius:1px;box-sizing:border-box;"></div>
<div style="position:absolute;left:337px;top:904px;width:736px;height:16px;background:#e8e8e8;"></div>
<div style="position:absolute;left:337px;top:904px;width:16px;height:16px;background:#fff;border:1px solid #ababab;border-radius:1px;box-sizing:border-box;"></div>
<div style="position:absolute;left:354px;top:904px;width:286px;height:16px;background:#fff;border:1px solid #ababab;border-radius:1px;box-sizing:border-box;"></div>
<div style="position:absolute;left:1057px;top:904px;width:16px;height:16px;background:#fff;border:1px solid #ababab;border-radius:1px;box-sizing:border-box;"></div>
<svg style="position:absolute;left:0px;top:880px;" width="1100" height="50" viewBox="0 880 1100 50"><path d="M1081.5 205 L1085.5 200.5 L1089.5 205 Z" fill="#6b756b"/><path d="M1081.5 885.5 L1089.5 885.5 L1085.5 890 Z" fill="#6b756b"/><path d="M347.5 908.5 L347.5 915.5 L343.5 912 Z" fill="#6b756b"/><path d="M1063 908.5 L1063 915.5 L1067 912 Z" fill="#6b756b"/><path d="M0 896.5 H121 M240 896.5 H337" stroke="#cfcfcf" stroke-width="1"/><path d="M28.5 908 L28.5 916 L23.5 912 Z" fill="#217346"/><path d="M55.5 908 L55.5 916 L60 912 Z" fill="#c8c8c8"/><path d="M73 907.5 H90 M73 912.5 H90 M73 917.5 H90" stroke="#217346" stroke-width="2"/><circle cx="101.5" cy="912.5" r="1.3" fill="#217346"/><circle cx="106" cy="912.5" r="1.3" fill="#217346"/><circle cx="110.5" cy="912.5" r="1.3" fill="#217346"/><circle cx="285.3" cy="911.5" r="8" fill="none" stroke="#666" stroke-width="1.3"/><path d="M281 911.5 H289.6 M285.3 907.2 V915.8" stroke="#666" stroke-width="1.4"/><circle cx="321.7" cy="907" r="1" fill="#b0b0b0"/><circle cx="321.7" cy="912" r="1" fill="#b0b0b0"/><circle cx="321.7" cy="917" r="1" fill="#b0b0b0"/></svg>
<div style="position:absolute;left:121px;top:896px;width:119px;height:28px;background:#fff;border-left:1px solid #cfcfcf;border-right:1px solid #cfcfcf;border-bottom:3px solid #217346;box-sizing:border-box;"></div>
<div class="t" style="left:-319.5px;width:1000px;text-align:center;top:901.8px;font-size:14.2px;color:#217346;font-weight:700;">Combo Show</div>
<div style="position:absolute;left:0px;top:927px;width:1513px;height:21px;background:#217346;"></div>
<div class="t" style="left:6.5px;top:935.0px;font-size:11px;color:#ffffff;">Ready</div>
<svg style="position:absolute;left:1280px;top:927px;" width="233" height="21" viewBox="1280 927 233 21"><path d="M1286 940.8 H1300" stroke="#a8b5a8" stroke-width="1.6"/><path d="M1306 940.3 H1438" stroke="#fff" stroke-width="1.2"/><rect x="1372" y="935" width="4.3" height="11" fill="#fff"/><path d="M1444.5 939.5 H1458 M1451.2 932.5 V946" stroke="#a8b5a8" stroke-width="1.6"/></svg>
<div class="t" style="left:1471.5px;top:933.9px;font-size:11.3px;color:#ffffff;">110%</div>
<div class="t" style="left:1108.5px;top:209.1px;font-size:17.5px;color:#262626;letter-spacing:0.1px;-webkit-text-stroke:0.55px #262626;">Data Chart</div>
<div class="t" style="left:1136.5px;top:249.0px;font-size:13px;color:#333333;">Inspector</div>
<div class="t" style="left:1236.0px;top:249.0px;font-size:13px;color:#217346;">Data Binding</div>
<div style="position:absolute;left:1207px;top:272px;width:110px;height:3px;background:#217346;"></div>
<div style="position:absolute;left:1103px;top:282px;width:406px;height:1px;background:#d8d8d8;"></div>
<div class="t" style="left:1113.5px;top:305.0px;font-size:13px;color:#333333;">Selected Table</div>
<div class="t" style="left:1113.5px;top:349.0px;font-size:13px;color:#333333;">Chart Type</div>
<div style="position:absolute;left:1268px;top:294px;width:230px;height:33px;border:1px solid #d8d8d8;border-radius:5px;box-sizing:border-box;"></div>
<div class="t" style="left:1279.5px;top:306.5px;font-size:12.2px;color:#262626;">Sales</div>
<div style="position:absolute;left:1268px;top:338px;width:191px;height:33px;border:1px solid #d8d8d8;border-radius:5px;box-sizing:border-box;"></div>
<div style="position:absolute;left:1466px;top:339px;width:31px;height:31px;background:#217346;border-radius:4px;"></div>
<div style="position:absolute;left:1103px;top:376px;width:41px;height:33px;background:#d3ddd7;"></div>
<div style="position:absolute;left:1103px;top:376px;width:2px;height:33px;background:#217346;"></div>
<div class="t" style="left:1155.5px;top:394.9px;font-size:13px;color:#333333;">Filter</div>
<div class="t" style="left:1155.5px;top:425.0px;font-size:13px;color:#333333;">Value</div>
<div class="t" style="left:1155.5px;top:508.9px;font-size:13px;color:#333333;">Category</div>
<div class="t" style="left:1155.5px;top:593.8px;font-size:13px;color:#333333;">Color</div>
<div class="t" style="left:1155.5px;top:670.7px;font-size:13px;color:#333333;">Detail</div>
<div class="t" style="left:1155.5px;top:747.9px;font-size:13px;color:#333333;">Tip Label</div>
<div style="position:absolute;left:1155.5px;top:447px;width:135.5px;height:46px;border:1px dashed #d9d9d9;box-sizing:border-box;"></div>
<div style="position:absolute;left:1155.5px;top:531px;width:135.5px;height:46px;border:1px dashed #d9d9d9;box-sizing:border-box;"></div>
<div style="position:absolute;left:1155.5px;top:616px;width:135.5px;height:38px;border:1px dashed #d9d9d9;box-sizing:border-box;"></div>
<div style="position:absolute;left:1155.5px;top:693px;width:135.5px;height:38px;border:1px dashed #d9d9d9;box-sizing:border-box;"></div>
<div style="position:absolute;left:1155.5px;top:770px;width:135.5px;height:38px;border:1px dashed #d9d9d9;box-sizing:border-box;"></div>
<div class="t" style="left:1162.0px;top:453.4px;font-size:12.5px;color:#262626;">Sum(revenu...</div>
<div class="t" style="left:1162.0px;top:537.6px;font-size:12.5px;color:#262626;">region</div>
<div class="t" style="left:723.5px;width:1000px;text-align:center;top:629.8px;font-size:12px;color:#333333;font-style:italic;">Drop field.</div>
<div class="t" style="left:723.5px;width:1000px;text-align:center;top:706.8px;font-size:12px;color:#333333;font-style:italic;">Drop field.</div>
<div class="t" style="left:723.5px;width:1000px;text-align:center;top:783.8px;font-size:12px;color:#333333;font-style:italic;">Drop field.</div>
<div style="position:absolute;left:1302px;top:387px;width:1px;height:529px;background:#d0d0d0;"></div>
<div style="position:absolute;left:1309px;top:387px;width:188px;height:33px;background:#fff;border-radius:5px;"></div>
<div class="t" style="left:1336.0px;top:398.5px;font-size:12px;color:#8a8a8a;">Search Fields...</div>
<div class="t" style="left:1353.8px;top:433.7px;font-size:13px;color:#262626;">Sales</div>
<div class="t" style="left:1364.5px;top:461.2px;font-size:13px;color:#262626;">region</div>
<div class="t" style="left:1364.5px;top:488.8px;font-size:13px;color:#262626;">revenueA</div>
<div class="t" style="left:1364.5px;top:516.9px;font-size:13px;color:#262626;">revenueB</div>
<div class="t" style="left:1364.5px;top:543.9px;font-size:13px;color:#262626;">satisfaction</div>
<div class="t" style="left:1364.5px;top:571.4px;font-size:13px;color:#262626;">conversion</div>
<svg style="position:absolute;left:1095px;top:190px;" width="418" height="730" viewBox="1095 190 418 730"><polygon points="1130.65,253.24 1130.80,254.80 1128.92,256.02 1128.57,257.19 1129.45,259.24 1128.46,260.46 1126.27,259.99 1125.19,260.57 1124.36,262.65 1122.80,262.80 1121.58,260.92 1120.41,260.57 1118.36,261.45 1117.14,260.46 1117.61,258.27 1117.03,257.19 1114.95,256.36 1114.80,254.80 1116.68,253.58 1117.03,252.41 1116.15,250.36 1117.14,249.14 1119.33,249.61 1120.41,249.03 1121.24,246.95 1122.80,246.80 1124.02,248.68 1125.19,249.03 1127.24,248.15 1128.46,249.14 1127.99,251.33 1128.57,252.41" fill="none" stroke="#555" stroke-width="1" stroke-linejoin="round"/><circle cx="1122.8" cy="254.8" r="2.80" fill="none" stroke="#555" stroke-width="1"/><ellipse cx="1221.7" cy="249.5" rx="7.5" ry="2.8" fill="none" stroke="#217346" stroke-width="1.2"/><path d="M1214.2 249.5 V260.5 A7.5 2.8 0 0 0 1229.2 260.5 V249.5 M1214.2 253.2 A7.5 2.8 0 0 0 1229.2 253.2 M1214.2 256.9 A7.5 2.8 0 0 0 1229.2 256.9" fill="none" stroke="#217346" stroke-width="1.2"/><path d="M1474.5 308.5 L1478.8 313 L1483.2 308.5" stroke="#333" stroke-width="1.3" fill="none"/><path d="M1436.5 352.5 L1440.8 357 L1445.2 352.5" stroke="#333" stroke-width="1.3" fill="none"/><path d="M1337.5 344 V363.5 H1357" stroke="#8a8a8a" stroke-width="1" fill="none"/><rect x="1340" y="351" width="3" height="11" fill="#9a9a9a"/><rect x="1345" y="345" width="3" height="17" fill="#3b8ad6"/><rect x="1350" y="348" width="3" height="14" fill="#f2c12e"/><path d="M1473 351.5 L1478 347.5 L1482.5 349.5 L1488.8 345" stroke="#fff" stroke-width="1.4" fill="none"/><rect x="1473.2" y="354" width="2.6" height="8" fill="#fff"/><rect x="1477.6" y="351" width="2.6" height="11" fill="#fff"/><rect x="1482" y="353" width="2.6" height="9" fill="#fff"/><rect x="1486.4" y="349.5" width="2.6" height="12.5" fill="#fff"/><path d="M1114.5 383.5 V402.5 H1133" stroke="#8a8a8a" stroke-width="1" fill="none"/><rect x="1117" y="391" width="3" height="10" fill="#9a9a9a"/><rect x="1122" y="385" width="3" height="16" fill="#3b8ad6"/><rect x="1127" y="388" width="3" height="13" fill="#f2c12e"/><path d="M1114.5 416 V435.5 H1133" stroke="#8a8a8a" stroke-width="1" fill="none"/><path d="M1116 434 V427 L1121 421.5 L1126 426 L1132 419 V434 Z" fill="#3b8ad6"/><path d="M1114.5 449.5 V468.5 H1133" stroke="#8a8a8a" stroke-width="1" fill="none"/><path d="M1116 462 L1121 455.5 L1125 459 L1132 452" stroke="#3b8ad6" stroke-width="1.6" fill="none"/><path d="M1118 492.5 H1129 M1123.5 487 V498" stroke="#333" stroke-width="1.2"/><path d="M1271.5 394.5 H1284 L1279.5 400.5 V408 L1276 405 V400.5 Z" fill="#217346"/><polygon points="1261.96,457.54 1262.10,459.00 1260.34,460.14 1260.00,461.24 1260.84,463.17 1259.90,464.30 1257.85,463.86 1256.84,464.40 1256.06,466.36 1254.60,466.50 1253.46,464.74 1252.36,464.40 1250.43,465.24 1249.30,464.30 1249.74,462.25 1249.20,461.24 1247.24,460.46 1247.10,459.00 1248.86,457.86 1249.20,456.76 1248.36,454.83 1249.30,453.70 1251.35,454.14 1252.36,453.60 1253.14,451.64 1254.60,451.50 1255.74,453.26 1256.84,453.60 1258.77,452.76 1259.90,453.70 1259.46,455.75 1260.00,456.76" fill="none" stroke="#555" stroke-width="1" stroke-linejoin="round"/><circle cx="1254.6" cy="459" r="2.62" fill="none" stroke="#555" stroke-width="1"/><path d="M1270 454.5 H1282.5 M1274 454.5 V452.5 H1278.5 V454.5" stroke="#333" stroke-width="1.2" fill="none"/><path d="M1271.5 456 H1281 V465.5 H1271.5 Z" fill="none" stroke="#333" stroke-width="1.2"/><path d="M1274.2 458 V463.5 M1276.2 458 V463.5 M1278.3 458 V463.5" stroke="#333" stroke-width="1"/><polygon points="1261.96,541.54 1262.10,543.00 1260.34,544.14 1260.00,545.24 1260.84,547.17 1259.90,548.30 1257.85,547.86 1256.84,548.40 1256.06,550.36 1254.60,550.50 1253.46,548.74 1252.36,548.40 1250.43,549.24 1249.30,548.30 1249.74,546.25 1249.20,545.24 1247.24,544.46 1247.10,543.00 1248.86,541.86 1249.20,540.76 1248.36,538.83 1249.30,537.70 1251.35,538.14 1252.36,537.60 1253.14,535.64 1254.60,535.50 1255.74,537.26 1256.84,537.60 1258.77,536.76 1259.90,537.70 1259.46,539.75 1260.00,540.76" fill="none" stroke="#555" stroke-width="1" stroke-linejoin="round"/><circle cx="1254.6" cy="543" r="2.62" fill="none" stroke="#555" stroke-width="1"/><path d="M1270 538.5 H1282.5 M1274 538.5 V536.5 H1278.5 V538.5" stroke="#333" stroke-width="1.2" fill="none"/><path d="M1271.5 540 H1281 V549.5 H1271.5 Z" fill="none" stroke="#333" stroke-width="1.2"/><path d="M1274.2 542 V547.5 M1276.2 542 V547.5 M1278.3 542 V547.5" stroke="#333" stroke-width="1"/><circle cx="1321.5" cy="402.5" r="6" fill="none" stroke="#333" stroke-width="1.4"/><path d="M1325.8 407 L1330 411.5" stroke="#333" stroke-width="1.5"/><path d="M1313.5 438 L1318 442.5 L1322.5 438" stroke="#666" stroke-width="1.1" fill="none"/><rect x="1330.5" y="434" width="17" height="11.5" fill="none" stroke="#8a8a8a" stroke-width="1"/><rect x="1330.5" y="434" width="17" height="2.5" fill="#8a8a8a"/><path d="M1330.5 439.5 H1347.5 M1330.5 442.5 H1347.5 M1336 436 V445.5 M1342 436 V445.5" stroke="#8a8a8a" stroke-width=".8"/><text x="1340.5" y="471.3" font-family="Liberation Sans" font-size="9.5" fill="#777" textLength="18" lengthAdjust="spacingAndGlyphs">ABC</text><path d="M1348.3 488.8 L1345.6 500.8 M1354.3 488.8 L1351.6 500.8 M1343.3 492.6 H1356.8 M1342.8 496.8 H1356.3" stroke="#5f705f" stroke-width="1.3" fill="none"/><path d="M1348.3 516.9 L1345.6 528.9 M1354.3 516.9 L1351.6 528.9 M1343.3 520.6999999999999 H1356.8 M1342.8 524.9 H1356.3" stroke="#5f705f" stroke-width="1.3" fill="none"/><path d="M1348.3 543.9 L1345.6 555.9 M1354.3 543.9 L1351.6 555.9 M1343.3 547.6999999999999 H1356.8 M1342.8 551.9 H1356.3" stroke="#5f705f" stroke-width="1.3" fill="none"/><path d="M1348.3 571.4 L1345.6 583.4 M1354.3 571.4 L1351.6 583.4 M1343.3 575.1999999999999 H1356.8 M1342.8 579.4 H1356.3" stroke="#5f705f" stroke-width="1.3" fill="none"/></svg>
</body></html>
